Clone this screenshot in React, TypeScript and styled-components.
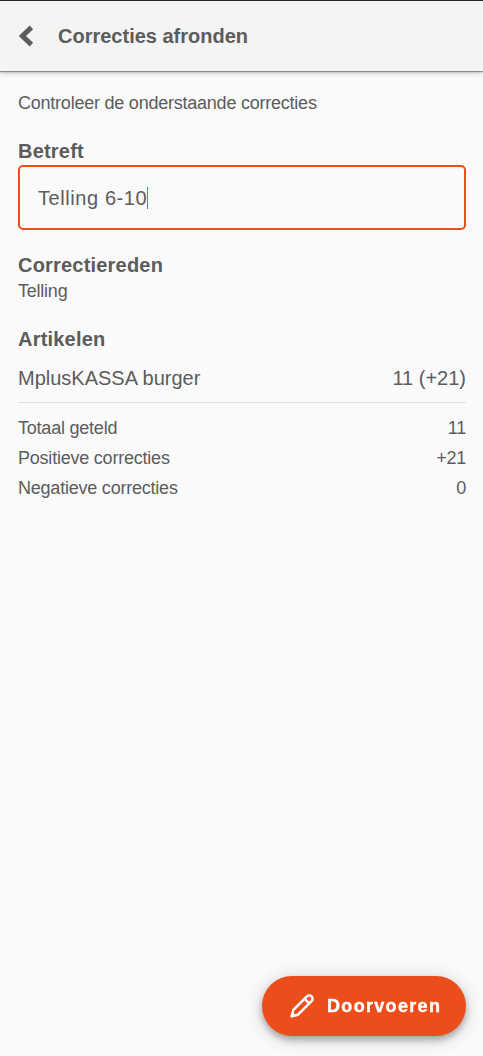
import React from "react";
import styled, { createGlobalStyle } from "styled-components";

const GlobalStyle = createGlobalStyle`
  *, *::before, *::after { box-sizing: border-box; }
  body {
    margin: 0;
    background: #fafafa;
    color: #5c5c5c;
    font-family: Arial, "Liberation Sans", sans-serif;
  }
`;

const Screen = styled.div`
  display: flex;
  flex-direction: column;
  min-height: 100vh;
`;

const AppBar = styled.header`
  display: flex;
  align-items: center;
  gap: 24px;
  height: 71px;
  padding: 0 18px;
  background: #f4f4f4;
  border-top: 1px solid #24252c;
  box-shadow: 0 1px 1px rgba(60, 70, 60, 0.5), 0 2px 5px rgba(0, 0, 0, 0.22);
`;

const BackButton = styled.button`
  display: flex;
  padding: 0;
  border: 0;
  background: none;
  color: #5c5c5c;
`;

const PageTitle = styled.h1`
  margin: 0;
  font-size: 20px;
  line-height: 26px;
  font-weight: 700;
`;

const Content = styled.main`
  flex: 1;
  padding: 20px 17px 0 18px;
`;

const Text = styled.p`
  margin: 0;
  font-size: 18px;
  line-height: 24px;
  letter-spacing: -0.23px;
`;

const Section = styled.section<{ $top: number }>`
  margin-top: ${(p) => p.$top}px;
`;

const Heading = styled.h2`
  margin: 0;
  font-size: 20px;
  line-height: 26px;
  letter-spacing: 0.2px;
`;

const Reason = styled(Text)`
  padding-top: 1px;
`;

const Field = styled.input`
  display: block;
  width: 100%;
  height: 65px;
  margin-top: 1px;
  padding: 2px 18px 0;
  border: 2px solid #eb4e1b;
  border-radius: 5px;
  outline: 0;
  background: transparent;
  color: #5c5c5c;
  caret-color: transparent;
  font: 20px Arial, "Liberation Sans", sans-serif;
  letter-spacing: 0.58px;
`;

const FieldBox = styled.div`
  position: relative;
`;

const Caret = styled.span`
  position: absolute;
  left: 129px;
  top: 22px;
  width: 1px;
  height: 22px;
  background: #c9582f;
`;

const Article = styled.div`
  display: flex;
  justify-content: space-between;
  height: 51px;
  border-bottom: 1px solid #e0e0e0;
  font-size: 20px;
  line-height: 52px;
`;

const Totals = styled.dl`
  margin: 10px 0 0;
`;

const TotalRow = styled.div`
  display: flex;
  justify-content: space-between;
  font-size: 18px;
  line-height: 30px;
  letter-spacing: -0.22px;

  dd { margin: 0; }
`;

const SubmitButton = styled.button`
  position: fixed;
  right: 17px;
  bottom: 20px;
  display: flex;
  align-items: center;
  gap: 12px;
  width: 204px;
  height: 60px;
  padding: 0 0 0 27px;
  border: 0;
  border-radius: 30px;
  background: #eb4e1b;
  color: #fff;
  font: 700 18px Arial, "Liberation Sans", sans-serif;
  letter-spacing: 1.32px;
  -webkit-text-stroke: 0.4px #fff;
  box-shadow: 0 4px 6px rgba(0, 0, 0, 0.25), 0 3px 18px rgba(0, 0, 0, 0.2);
`;

const totals = [
  ["Totaal geteld", "11"],
  ["Positieve correcties", "+21"],
  ["Negatieve correcties", "0"],
];

export default function App() {
  return (
    <Screen>
      <GlobalStyle />
      <AppBar>
        <BackButton aria-label="Terug">
          <svg width="16" height="22" viewBox="0 0 16 22" fill="none" stroke="currentColor" strokeWidth="5">
            <path d="M13.4 2.4 4.4 11l9 8.6" />
          </svg>
        </BackButton>
        <PageTitle>Correcties afronden</PageTitle>
      </AppBar>
      <Content>
        <Text>Controleer de onderstaande correcties</Text>
        <Section $top={23}>
          <Heading>Betreft</Heading>
          <FieldBox>
            <Field aria-label="Betreft" defaultValue="Telling 6-10" />
            <Caret />
          </FieldBox>
        </Section>
        <Section $top={22}>
          <Heading>Correctiereden</Heading>
          <Reason>Telling</Reason>
        </Section>
        <Section $top={23}>
          <Heading>Artikelen</Heading>
          <Article>
            <span>MplusKASSA burger</span>
            <span>11 (+21)</span>
          </Article>
          <Totals>
            {totals.map(([label, value]) => (
              <TotalRow key={label}>
                <dt>{label}</dt>
                <dd>{value}</dd>
              </TotalRow>
            ))}
          </Totals>
        </Section>
      </Content>
      <SubmitButton>
        <svg width="26" height="26" viewBox="0 0 26 26" fill="none" stroke="currentColor" strokeWidth="2.5" strokeLinejoin="round">
          <path d="M2.7 23.3 4.3 17 17.9 3.4a3.3 3.3 0 0 1 4.7 4.7L9 21.7Z" />
          <path d="m15.6 5.8 4.6 4.6" />
          <path d="M1.4 24.6l1.7-6.2 4.5 4.5Z" fill="currentColor" stroke="none" />
        </svg>
        Doorvoeren
      </SubmitButton>
    </Screen>
  );
}
